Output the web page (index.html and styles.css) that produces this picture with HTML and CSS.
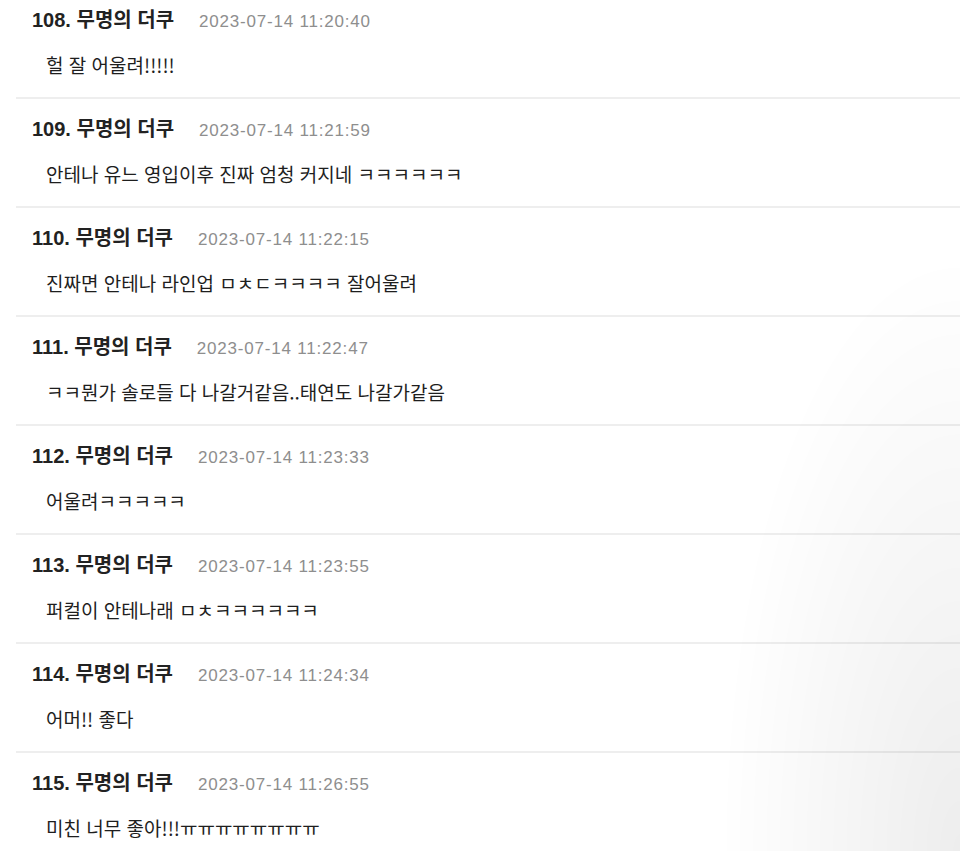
FILE: index.html
```html
<!DOCTYPE html>
<html lang="ko">
<head>
<meta charset="utf-8">
<title>댓글</title>
<link rel="stylesheet" href="styles.css">
</head>
<body>
<ul class="comments">
  <li class="comment">
    <div class="head"><span class="name">108. 무명의 더쿠</span><span class="date">2023-07-14 11:20:40</span></div>
    <p class="text">헐 잘 어울려!!!!!</p>
  </li>
  <li class="comment">
    <div class="head"><span class="name">109. 무명의 더쿠</span><span class="date">2023-07-14 11:21:59</span></div>
    <p class="text">안테나 유느 영입이후 진짜 엄청 커지네 ㅋㅋㅋㅋㅋㅋ</p>
  </li>
  <li class="comment">
    <div class="head"><span class="name">110. 무명의 더쿠</span><span class="date">2023-07-14 11:22:15</span></div>
    <p class="text">진짜면 안테나 라인업 ㅁㅊㄷㅋㅋㅋㅋ 잘어울려</p>
  </li>
  <li class="comment">
    <div class="head"><span class="name">111. 무명의 더쿠</span><span class="date">2023-07-14 11:22:47</span></div>
    <p class="text">ㅋㅋ뭔가 솔로들 다 나갈거같음..태연도 나갈가같음</p>
  </li>
  <li class="comment">
    <div class="head"><span class="name">112. 무명의 더쿠</span><span class="date">2023-07-14 11:23:33</span></div>
    <p class="text">어울려ㅋㅋㅋㅋㅋ</p>
  </li>
  <li class="comment">
    <div class="head"><span class="name">113. 무명의 더쿠</span><span class="date">2023-07-14 11:23:55</span></div>
    <p class="text">퍼컬이 안테나래 ㅁㅊㅋㅋㅋㅋㅋㅋ</p>
  </li>
  <li class="comment">
    <div class="head"><span class="name">114. 무명의 더쿠</span><span class="date">2023-07-14 11:24:34</span></div>
    <p class="text">어머!! 좋다</p>
  </li>
  <li class="comment">
    <div class="head"><span class="name">115. 무명의 더쿠</span><span class="date">2023-07-14 11:26:55</span></div>
    <p class="text">미친 너무 좋아!!!ㅠㅠㅠㅠㅠㅠㅠㅠ</p>
  </li>
</ul>
<div class="shade"></div>
</body>
</html>
```

FILE: styles.css
```css
html, body {
  margin: 0;
  padding: 0;
  background: #ffffff;
  overflow: hidden;
  height: 851px;
}

body {
  font-family: "Liberation Sans", "Noto Sans CJK KR", sans-serif;
  color: #222222;
}

.comments {
  list-style: none;
  margin: -10px 0 0 16px;
  padding: 0;
}

.comment {
  padding: 16px 0 18px 16px;
  border-bottom: 2px solid #eeeeee;
}

.head {
  display: flex;
  align-items: baseline;
  height: 28px;
  line-height: 28px;
  white-space: nowrap;
}

.name {
  font-size: 20px;
  font-weight: 700;
  color: #222222;
}

.date {
  margin-left: 25px;
  font-size: 17px;
  letter-spacing: 0.8px;
  color: #8e8e8e;
}

.text {
  margin: 17px 0 0 14px;
  height: 28px;
  line-height: 28px;
  font-family: "Noto Sans CJK KR", "Liberation Sans", sans-serif;
  font-size: 19px;
  color: #1e1e1e;
  white-space: nowrap;
}

.shade {
  position: fixed;
  inset: 0;
  pointer-events: none;
  background:
    radial-gradient(ellipse 240px 600px at 100% 100%, rgba(0,0,0,0.07), rgba(0,0,0,0) 100%);
}
```
